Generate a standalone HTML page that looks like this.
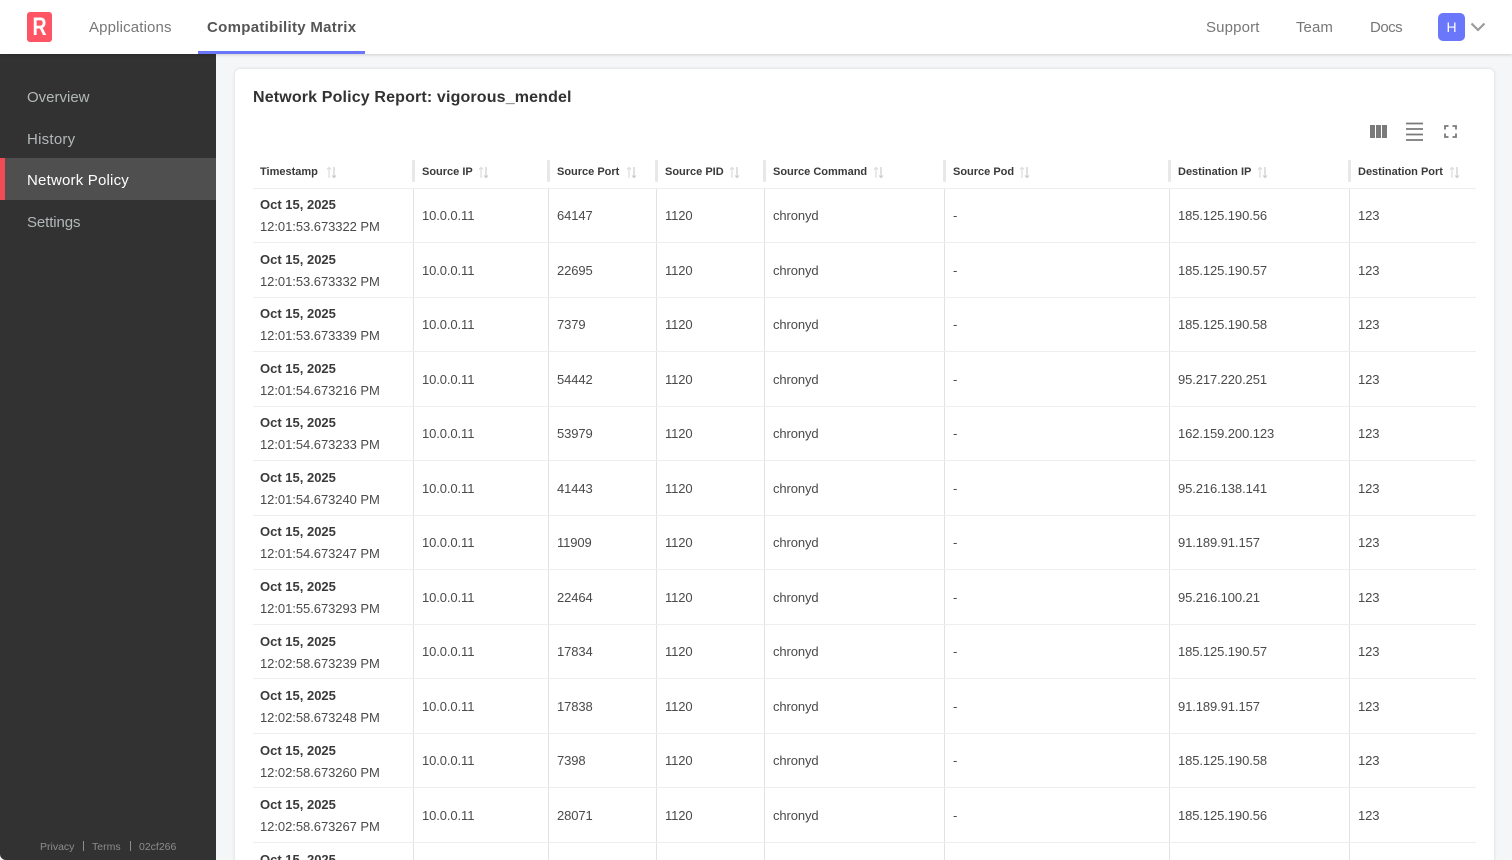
<!DOCTYPE html>
<html><head><meta charset="utf-8"><style>
html,body{margin:0;padding:0;width:1512px;height:860px;overflow:hidden;background:#f5f6f8;font-family:"Liberation Sans",sans-serif}
div,span{position:absolute;white-space:nowrap}
#r{left:0;top:0;width:1512px;height:860px;overflow:hidden;background:#f5f6f8}
.nav{top:18px;font-size:15px;line-height:20px;color:#777;letter-spacing:.15px}
.side{left:27px;font-size:15px;line-height:20px;color:#b3b8b8}
.th{top:166px;font-size:11px;line-height:13px;font-weight:bold;color:#3a3a3a}
.vh{top:160px;width:3px;height:22px;background:#e8e8e8;border-radius:1px}
.v{top:188px;width:1px;height:672px;background:#e2e2e2}
.sep{left:253px;width:1223px;height:1px;background:#eee}
.d{left:260px;margin-top:1px;font-size:13px;line-height:16px;font-weight:bold;color:#3a3a3a}
.t{left:260px;margin-top:1px;font-size:13px;line-height:16px;color:#4a4a4a;letter-spacing:-.05px}
.c{margin-top:1px;font-size:13px;line-height:16px;color:#4a4a4a;letter-spacing:-.1px}
svg{position:absolute}
</style></head><body><div id="r">
<div style="left:235px;top:69px;width:1259px;height:800px;background:#fff;border-radius:5px;box-shadow:0 0 3px rgba(0,0,0,.14)"></div>

<div style="left:0;top:54px;width:216px;height:806px;background:#323232;border-bottom-left-radius:6px"></div>
<div style="left:0;top:158px;width:216px;height:42px;background:#4f4f4f"></div>
<div style="left:0;top:158px;width:5px;height:42px;background:#f04b55"></div>
<div class="side" style="top:88px">Overview</div>
<div class="side" style="top:130px;letter-spacing:.25px">History</div>
<div class="side" style="top:171px;color:#fff;letter-spacing:.2px">Network Policy</div>
<div class="side" style="top:213px;letter-spacing:-.1px">Settings</div>
<div style="left:40px;top:840px;font-size:10.5px;line-height:14px;color:#8d8d8d">Privacy</div>
<div style="left:83px;top:841px;width:1px;height:10px;background:#8d8d8d"></div>
<div style="left:92px;top:840px;font-size:10.5px;line-height:14px;color:#8d8d8d">Terms</div>
<div style="left:130px;top:841px;width:1px;height:10px;background:#8d8d8d"></div>
<div style="left:139px;top:840px;font-size:10.5px;line-height:14px;color:#8d8d8d">02cf266</div>

<div style="left:0;top:0;width:1512px;height:54px;background:#fff;box-shadow:0 1px 3px rgba(0,0,0,.16)"></div>
<div style="left:27px;top:12px;width:25px;height:30px;background:#fd5564;border-radius:3px"></div>
<div style="left:27px;top:12px;width:25px;height:30px;text-align:center;font-size:25px;line-height:30px;font-weight:bold;color:#fff;transform:scaleX(.78)">R</div>
<div class="nav" style="left:89px">Applications</div>
<div class="nav" style="left:207px;font-weight:bold;color:#555;letter-spacing:.3px">Compatibility Matrix</div>
<div style="left:198px;top:51px;width:167px;height:3px;background:#6a77fb"></div>
<div class="nav" style="left:1206px">Support</div>
<div class="nav" style="left:1296px;letter-spacing:.05px">Team</div>
<div class="nav" style="left:1370px;letter-spacing:-.5px">Docs</div>
<div style="left:1438px;top:13px;width:27px;height:28px;background:#6a77fb;border-radius:5px;color:#fff;font-size:14px;line-height:28px;text-align:center">H</div>
<svg style="left:1470px;top:20px" width="16" height="14" viewBox="0 0 16 14"><path d="M1.5 3.5 L8 10 L14.5 3.5" fill="none" stroke="#9b9b9b" stroke-width="2.2"/></svg>

<div style="left:253px;top:87px;font-size:16px;line-height:22px;font-weight:bold;color:#323232;letter-spacing:.15px">Network Policy Report: vigorous_mendel</div>

<svg style="left:1370px;top:125px" width="17" height="13" viewBox="0 0 17 13"><rect x="0" y="0" width="5" height="13" fill="#7a7a7a"/><rect x="6" y="0" width="5" height="13" fill="#7a7a7a"/><rect x="12" y="0" width="5" height="13" fill="#7a7a7a"/></svg>
<svg style="left:1406px;top:122px" width="17" height="19" viewBox="0 0 17 19"><path d="M0 1.5H17M0 7H17M0 12.5H17M0 18H17" stroke="#7a7a7a" stroke-width="1.8" fill="none"/></svg>
<svg style="left:1444px;top:125px" width="13" height="13" viewBox="0 0 13 13"><path d="M1 4.5V1H4.5M8.5 1H12V4.5M12 8.5V12H8.5M4.5 12H1V8.5" stroke="#7a7a7a" stroke-width="1.8" fill="none"/></svg>

<div class="th" style="left:260px">Timestamp</div>
<div class="th" style="left:422px">Source IP</div>
<div class="th" style="left:557px">Source Port</div>
<div class="th" style="left:665px">Source PID</div>
<div class="th" style="left:773px">Source Command</div>
<div class="th" style="left:953px">Source Pod</div>
<div class="th" style="left:1178px">Destination IP</div>
<div class="th" style="left:1358px">Destination Port</div>

<svg style="left:325.5px;top:166px" width="11" height="13" viewBox="0 0 11 13"><path d="M3 12V1.5M1 3.5L3 1.5L5 3.5" stroke="#ddd" stroke-width="1.2" fill="none"/><path d="M8 1V11.5M6 9.5L8 11.5L10 9.5" stroke="#ccc" stroke-width="1.2" fill="none"/></svg>
<svg style="left:477.5px;top:166px" width="11" height="13" viewBox="0 0 11 13"><path d="M3 12V1.5M1 3.5L3 1.5L5 3.5" stroke="#ddd" stroke-width="1.2" fill="none"/><path d="M8 1V11.5M6 9.5L8 11.5L10 9.5" stroke="#ccc" stroke-width="1.2" fill="none"/></svg>
<svg style="left:625.5px;top:166px" width="11" height="13" viewBox="0 0 11 13"><path d="M3 12V1.5M1 3.5L3 1.5L5 3.5" stroke="#ddd" stroke-width="1.2" fill="none"/><path d="M8 1V11.5M6 9.5L8 11.5L10 9.5" stroke="#ccc" stroke-width="1.2" fill="none"/></svg>
<svg style="left:728.5px;top:166px" width="11" height="13" viewBox="0 0 11 13"><path d="M3 12V1.5M1 3.5L3 1.5L5 3.5" stroke="#ddd" stroke-width="1.2" fill="none"/><path d="M8 1V11.5M6 9.5L8 11.5L10 9.5" stroke="#ccc" stroke-width="1.2" fill="none"/></svg>
<svg style="left:872.5px;top:166px" width="11" height="13" viewBox="0 0 11 13"><path d="M3 12V1.5M1 3.5L3 1.5L5 3.5" stroke="#ddd" stroke-width="1.2" fill="none"/><path d="M8 1V11.5M6 9.5L8 11.5L10 9.5" stroke="#ccc" stroke-width="1.2" fill="none"/></svg>
<svg style="left:1018.5px;top:166px" width="11" height="13" viewBox="0 0 11 13"><path d="M3 12V1.5M1 3.5L3 1.5L5 3.5" stroke="#ddd" stroke-width="1.2" fill="none"/><path d="M8 1V11.5M6 9.5L8 11.5L10 9.5" stroke="#ccc" stroke-width="1.2" fill="none"/></svg>
<svg style="left:1256.5px;top:166px" width="11" height="13" viewBox="0 0 11 13"><path d="M3 12V1.5M1 3.5L3 1.5L5 3.5" stroke="#ddd" stroke-width="1.2" fill="none"/><path d="M8 1V11.5M6 9.5L8 11.5L10 9.5" stroke="#ccc" stroke-width="1.2" fill="none"/></svg>
<svg style="left:1449px;top:166px" width="11" height="13" viewBox="0 0 11 13"><path d="M3 12V1.5M1 3.5L3 1.5L5 3.5" stroke="#ddd" stroke-width="1.2" fill="none"/><path d="M8 1V11.5M6 9.5L8 11.5L10 9.5" stroke="#ccc" stroke-width="1.2" fill="none"/></svg>

<div class="vh" style="left:412px"></div><div class="vh" style="left:547px"></div><div class="vh" style="left:655px"></div><div class="vh" style="left:763px"></div><div class="vh" style="left:943px"></div><div class="vh" style="left:1168px"></div><div class="vh" style="left:1348px"></div>
<div class="v" style="left:413px"></div><div class="v" style="left:548px"></div><div class="v" style="left:656px"></div><div class="v" style="left:764px"></div><div class="v" style="left:944px"></div><div class="v" style="left:1169px"></div><div class="v" style="left:1349px"></div>

<div class="sep" style="top:188px"></div><div class="sep" style="top:242px"></div><div class="sep" style="top:297px"></div><div class="sep" style="top:351px"></div><div class="sep" style="top:406px"></div><div class="sep" style="top:460px"></div><div class="sep" style="top:515px"></div><div class="sep" style="top:569px"></div><div class="sep" style="top:624px"></div><div class="sep" style="top:678px"></div><div class="sep" style="top:733px"></div><div class="sep" style="top:787px"></div><div class="sep" style="top:842px"></div>

<div class="d" style="top:196px">Oct 15, 2025</div><div class="t" style="top:218px">12:01:53.673322 PM</div><div class="c" style="top:207px;left:422px">10.0.0.11</div><div class="c" style="top:207px;left:557px">64147</div><div class="c" style="top:207px;left:665px">1120</div><div class="c" style="top:207px;left:773px">chronyd</div><div class="c" style="top:207px;left:953px">-</div><div class="c" style="top:207px;left:1178px">185.125.190.56</div><div class="c" style="top:207px;left:1358px">123</div>
<div class="d" style="top:251px">Oct 15, 2025</div><div class="t" style="top:273px">12:01:53.673332 PM</div><div class="c" style="top:262px;left:422px">10.0.0.11</div><div class="c" style="top:262px;left:557px">22695</div><div class="c" style="top:262px;left:665px">1120</div><div class="c" style="top:262px;left:773px">chronyd</div><div class="c" style="top:262px;left:953px">-</div><div class="c" style="top:262px;left:1178px">185.125.190.57</div><div class="c" style="top:262px;left:1358px">123</div>
<div class="d" style="top:305px">Oct 15, 2025</div><div class="t" style="top:327px">12:01:53.673339 PM</div><div class="c" style="top:316px;left:422px">10.0.0.11</div><div class="c" style="top:316px;left:557px">7379</div><div class="c" style="top:316px;left:665px">1120</div><div class="c" style="top:316px;left:773px">chronyd</div><div class="c" style="top:316px;left:953px">-</div><div class="c" style="top:316px;left:1178px">185.125.190.58</div><div class="c" style="top:316px;left:1358px">123</div>
<div class="d" style="top:360px">Oct 15, 2025</div><div class="t" style="top:382px">12:01:54.673216 PM</div><div class="c" style="top:371px;left:422px">10.0.0.11</div><div class="c" style="top:371px;left:557px">54442</div><div class="c" style="top:371px;left:665px">1120</div><div class="c" style="top:371px;left:773px">chronyd</div><div class="c" style="top:371px;left:953px">-</div><div class="c" style="top:371px;left:1178px">95.217.220.251</div><div class="c" style="top:371px;left:1358px">123</div>
<div class="d" style="top:414px">Oct 15, 2025</div><div class="t" style="top:436px">12:01:54.673233 PM</div><div class="c" style="top:425px;left:422px">10.0.0.11</div><div class="c" style="top:425px;left:557px">53979</div><div class="c" style="top:425px;left:665px">1120</div><div class="c" style="top:425px;left:773px">chronyd</div><div class="c" style="top:425px;left:953px">-</div><div class="c" style="top:425px;left:1178px">162.159.200.123</div><div class="c" style="top:425px;left:1358px">123</div>
<div class="d" style="top:469px">Oct 15, 2025</div><div class="t" style="top:491px">12:01:54.673240 PM</div><div class="c" style="top:480px;left:422px">10.0.0.11</div><div class="c" style="top:480px;left:557px">41443</div><div class="c" style="top:480px;left:665px">1120</div><div class="c" style="top:480px;left:773px">chronyd</div><div class="c" style="top:480px;left:953px">-</div><div class="c" style="top:480px;left:1178px">95.216.138.141</div><div class="c" style="top:480px;left:1358px">123</div>
<div class="d" style="top:523px">Oct 15, 2025</div><div class="t" style="top:545px">12:01:54.673247 PM</div><div class="c" style="top:534px;left:422px">10.0.0.11</div><div class="c" style="top:534px;left:557px">11909</div><div class="c" style="top:534px;left:665px">1120</div><div class="c" style="top:534px;left:773px">chronyd</div><div class="c" style="top:534px;left:953px">-</div><div class="c" style="top:534px;left:1178px">91.189.91.157</div><div class="c" style="top:534px;left:1358px">123</div>
<div class="d" style="top:578px">Oct 15, 2025</div><div class="t" style="top:600px">12:01:55.673293 PM</div><div class="c" style="top:589px;left:422px">10.0.0.11</div><div class="c" style="top:589px;left:557px">22464</div><div class="c" style="top:589px;left:665px">1120</div><div class="c" style="top:589px;left:773px">chronyd</div><div class="c" style="top:589px;left:953px">-</div><div class="c" style="top:589px;left:1178px">95.216.100.21</div><div class="c" style="top:589px;left:1358px">123</div>
<div class="d" style="top:633px">Oct 15, 2025</div><div class="t" style="top:655px">12:02:58.673239 PM</div><div class="c" style="top:643px;left:422px">10.0.0.11</div><div class="c" style="top:643px;left:557px">17834</div><div class="c" style="top:643px;left:665px">1120</div><div class="c" style="top:643px;left:773px">chronyd</div><div class="c" style="top:643px;left:953px">-</div><div class="c" style="top:643px;left:1178px">185.125.190.57</div><div class="c" style="top:643px;left:1358px">123</div>
<div class="d" style="top:687px">Oct 15, 2025</div><div class="t" style="top:709px">12:02:58.673248 PM</div><div class="c" style="top:698px;left:422px">10.0.0.11</div><div class="c" style="top:698px;left:557px">17838</div><div class="c" style="top:698px;left:665px">1120</div><div class="c" style="top:698px;left:773px">chronyd</div><div class="c" style="top:698px;left:953px">-</div><div class="c" style="top:698px;left:1178px">91.189.91.157</div><div class="c" style="top:698px;left:1358px">123</div>
<div class="d" style="top:742px">Oct 15, 2025</div><div class="t" style="top:764px">12:02:58.673260 PM</div><div class="c" style="top:752px;left:422px">10.0.0.11</div><div class="c" style="top:752px;left:557px">7398</div><div class="c" style="top:752px;left:665px">1120</div><div class="c" style="top:752px;left:773px">chronyd</div><div class="c" style="top:752px;left:953px">-</div><div class="c" style="top:752px;left:1178px">185.125.190.58</div><div class="c" style="top:752px;left:1358px">123</div>
<div class="d" style="top:796px">Oct 15, 2025</div><div class="t" style="top:818px">12:02:58.673267 PM</div><div class="c" style="top:807px;left:422px">10.0.0.11</div><div class="c" style="top:807px;left:557px">28071</div><div class="c" style="top:807px;left:665px">1120</div><div class="c" style="top:807px;left:773px">chronyd</div><div class="c" style="top:807px;left:953px">-</div><div class="c" style="top:807px;left:1178px">185.125.190.56</div><div class="c" style="top:807px;left:1358px">123</div>
<div class="d" style="top:851px">Oct 15, 2025</div>
</div></body></html>
